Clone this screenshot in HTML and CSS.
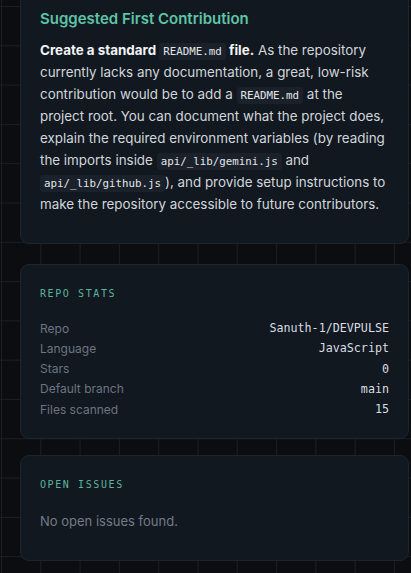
FILE: index.html
```html
<!DOCTYPE html>
<html lang="en">
<head>
    <meta charset="UTF-8">
    <meta name="viewport" content="width=device-width, initial-scale=1.0">
    <title>DevPulse - Report</title>
    <link rel="stylesheet" href="styles.css">
</head>
<body>
    <div class="container">
        <div class="card card-contribution">
            <h2 class="contribution-title">Suggested First Contribution</h2>
            <p class="contribution-text">
                <strong>Create a standard <code>README.md</code> file.</strong> As the repository
                currently lacks any documentation, a great, low-risk contribution would be to add a
                <code>README.md</code> at the project root. You can document what the project does,
                explain the required environment variables (by reading the imports inside
                <code>api/_lib/gemini.js</code> and <code>api/_lib/github.js</code>), and provide setup
                instructions to make the repository accessible to future contributors.
            </p>
        </div>

        <div class="card">
            <div class="card-label">Repo Stats</div>
            <div class="stats">
                <div class="stat-row">
                    <span class="stat-key">Repo</span>
                    <span class="stat-value">Sanuth-1/DEVPULSE</span>
                </div>
                <div class="stat-row">
                    <span class="stat-key">Language</span>
                    <span class="stat-value">JavaScript</span>
                </div>
                <div class="stat-row">
                    <span class="stat-key">Stars</span>
                    <span class="stat-value">0</span>
                </div>
                <div class="stat-row">
                    <span class="stat-key">Default branch</span>
                    <span class="stat-value">main</span>
                </div>
                <div class="stat-row">
                    <span class="stat-key">Files scanned</span>
                    <span class="stat-value">15</span>
                </div>
            </div>
        </div>

        <div class="card card-issues">
            <div class="card-label">Open Issues</div>
            <p class="empty">No open issues found.</p>
        </div>
    </div>
</body>
</html>
```

FILE: styles.css
```css
* {
    margin: 0;
    padding: 0;
    box-sizing: border-box;
}

html, body {
    height: 100%;
}

body {
    font-family: Inter, 'Noto Sans', sans-serif;
    background-color: #0b0d11;
    background-image:
        linear-gradient(to right, #1b1f25 1px, transparent 1px),
        linear-gradient(to bottom, #1b1f25 1px, transparent 1px);
    background-size: 39.3px 39.3px;
    background-position: 1px 6px;
    color: #d4d7dc;
    overflow: hidden;
}

.container {
    display: flex;
    flex-direction: column;
    margin: -12px 2px 0 20px;
}

.card {
    background: #111820;
    border: 1px solid #1e252e;
    border-radius: 9px;
    padding: 22px 19px 19px;
}

.card-contribution {
    padding: 19px 19px 28px;
    margin-bottom: 20px;
}

.contribution-title {
    font-size: 15px;
    font-weight: 600;
    line-height: 22px;
    color: #5ec4a6;
    margin-bottom: 9px;
}

.contribution-text {
    font-size: 13.4px;
    line-height: 22px;
    color: #d2d6db;
}

.contribution-text strong {
    color: #f2f4f6;
    font-weight: 700;
}

code {
    font-family: 'DejaVu Sans Mono', monospace;
    font-size: 10.8px;
    line-height: 12px;
    background: #1a212a;
    color: #e2e5e9;
    padding: 2px 4px;
    border-radius: 3px;
    font-weight: 400;
}

.card-label {
    font-family: 'DejaVu Sans Mono', monospace;
    font-size: 10px;
    line-height: 14px;
    letter-spacing: 1.6px;
    text-transform: uppercase;
    color: #5db39e;
}

.stats {
    display: flex;
    flex-direction: column;
    margin-top: 17px;
}

.stat-row {
    display: flex;
    justify-content: space-between;
    align-items: center;
    height: 20.25px;
}

.stat-key {
    font-size: 12px;
    color: #6c7480;
}

.stat-value {
    font-family: 'DejaVu Sans Mono', monospace;
    font-size: 11.7px;
    color: #d9dce0;
}

.card-issues {
    margin-top: 16px;
}

.empty {
    margin-top: 19px;
    margin-bottom: 10px;
    font-size: 13px;
    line-height: 20px;
    color: #737b86;
}
```
